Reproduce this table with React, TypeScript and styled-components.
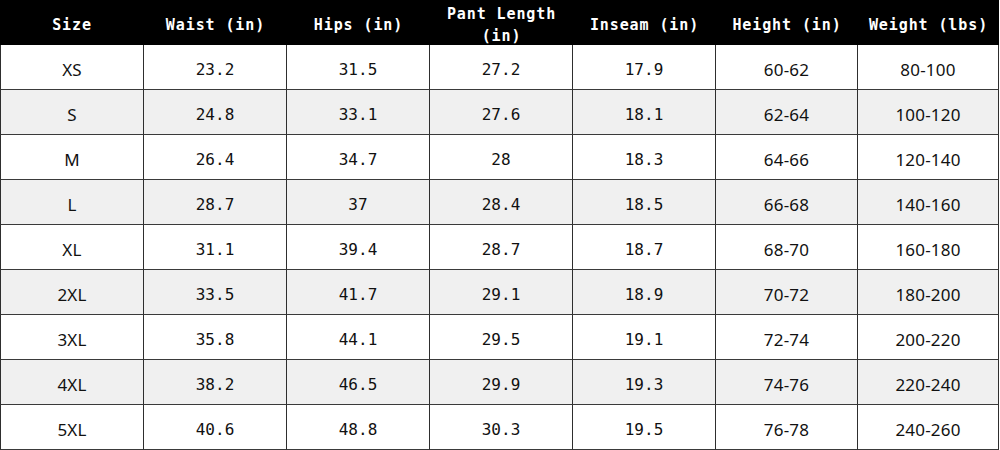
import styled, { createGlobalStyle } from 'styled-components';

const GlobalStyle = createGlobalStyle`
  html, body {
    margin: 0;
    padding: 0;
    background: #ffffff;
  }
`;

const columns = [
  { label: 'Size', mono: false },
  { label: 'Waist (in)', mono: true },
  { label: 'Hips (in)', mono: true },
  { label: 'Pant Length (in)', mono: true },
  { label: 'Inseam (in)', mono: true },
  { label: 'Height (in)', mono: false },
  { label: 'Weight (lbs)', mono: false }
];

const rows: string[][] = [
  ['XS', '23.2', '31.5', '27.2', '17.9', '60-62', '80-100'],
  ['S', '24.8', '33.1', '27.6', '18.1', '62-64', '100-120'],
  ['M', '26.4', '34.7', '28', '18.3', '64-66', '120-140'],
  ['L', '28.7', '37', '28.4', '18.5', '66-68', '140-160'],
  ['XL', '31.1', '39.4', '28.7', '18.7', '68-70', '160-180'],
  ['2XL', '33.5', '41.7', '29.1', '18.9', '70-72', '180-200'],
  ['3XL', '35.8', '44.1', '29.5', '19.1', '72-74', '200-220'],
  ['4XL', '38.2', '46.5', '29.9', '19.3', '74-76', '220-240'],
  ['5XL', '40.6', '48.8', '30.3', '19.5', '76-78', '240-260']
];

const Chart = styled.div`
  display: grid;
  grid-template-columns: 144px 143px 143px 143px 143px 142px 141px;
  grid-auto-rows: 45px;
  width: 999px;
`;

const HeadCell = styled.div`
  display: flex;
  align-items: center;
  justify-content: center;
  padding: 5px 2px 0;
  background: #000000;
  color: #ffffff;
  font-family: 'DejaVu Sans Mono', 'Liberation Mono', monospace;
  font-weight: bold;
  font-size: 15px;
  letter-spacing: 0.9px;
  line-height: 22px;
  text-align: center;
`;

const Cell = styled.div<{ $striped: boolean; $mono: boolean; $first: boolean }>`
  display: flex;
  align-items: center;
  justify-content: center;
  padding-top: 4px;
  box-sizing: border-box;
  background: ${(p) => (p.$striped ? '#f0f0f0' : '#ffffff')};
  border-right: 1px solid #2e2e2e;
  border-bottom: 1px solid #3a3a3a;
  border-left: ${(p) => (p.$first ? '1px solid #2e2e2e' : 'none')};
  color: #111111;
  font-family: ${(p) =>
    p.$mono ? `'DejaVu Sans Mono', 'Liberation Mono', monospace` : `'Noto Sans', 'Liberation Sans', sans-serif`};
  font-size: ${(p) => (p.$mono ? '16px' : '17px')};
  letter-spacing: ${(p) => (p.$mono ? '0px' : '0.2px')};
`;

export default function App() {
  return (
    <>
      <GlobalStyle />
      <Chart>
        {columns.map((col) => (
          <HeadCell key={col.label}>{col.label}</HeadCell>
        ))}
        {rows.map((row, r) =>
          row.map((value, c) => (
            <Cell
              key={`${r}-${c}`}
              $striped={r % 2 === 1}
              $mono={columns[c].mono}
              $first={c === 0}
            >
              {value}
            </Cell>
          ))
        )}
      </Chart>
    </>
  );
}
